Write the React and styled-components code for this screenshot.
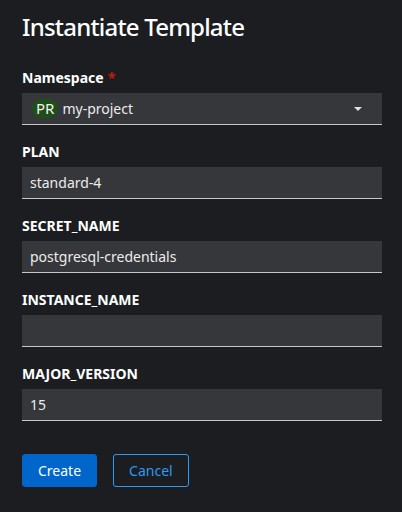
import React from "react";
import styled, { createGlobalStyle } from "styled-components";

const GlobalStyle = createGlobalStyle`
    html, body {
        margin: 0;
        padding: 0;
        background: #1b1d21;
        font-family: "Noto Sans", "Liberation Sans", sans-serif;
    }
`

const Page = styled.div`
    width: 402px;
    height: 512px;
    box-sizing: border-box;
    padding: 11px 20px 0 22px;
    color: #f0f0f0;
`

const Title = styled.h1`
    margin: 0 0 26px;
    font-size: 24px;
    font-weight: 500;
    line-height: 32px;
    letter-spacing: -0.8px;
    color: #ffffff;
`

const Form = styled.form`
    display: flex;
    flex-direction: column;
    gap: 18px;
`

const Field = styled.div`
    display: flex;
    flex-direction: column;
    gap: 6px;
`

const Label = styled.label`
    font-size: 14px;
    font-weight: 700;
    line-height: 18px;
    color: #ffffff;
`

const Required = styled.span`
    color: #c9190b;
    margin-left: 4px;
`

const Input = styled.div`
    height: 32px;
    box-sizing: border-box;
    background: #36373b;
    border-bottom: 1px solid #c7c7c7;
    padding: 0 8px;
    display: flex;
    align-items: center;
    font-size: 14px;
    color: #ececec;
`

const Select = styled(Input)`
    justify-content: space-between;
    padding: 0 20px 0 10px;
`

const SelectValue = styled.div`
    display: flex;
    align-items: center;
    gap: 4px;
`

const Badge = styled.span`
    background: #1e4f18;
    color: #f2f2f2;
    border-radius: 10px;
    padding: 0 4px;
    height: 19px;
    line-height: 19px;
    font-size: 15px;
`

const Caret = styled.span`
    width: 0;
    height: 0;
    border-left: 4px solid transparent;
    border-right: 4px solid transparent;
    border-top: 4px solid #e0e0e0;
`

const Actions = styled.div`
    display: flex;
    gap: 16px;
    margin-top: 15px;
`

const Button = styled.button`
    height: 33px;
    box-sizing: border-box;
    padding: 0 15px;
    border-radius: 3px;
    font-family: inherit;
    font-size: 14px;
    background: ${props => props.primary ? '#0066cc' : 'transparent'};
    color: ${props => props.primary ? '#ffffff' : '#2b9af3'};
    border: 1px solid ${props => props.primary ? '#0066cc' : '#2b9af3'};
`

const fields = [
    { name: 'PLAN', value: 'standard-4' },
    { name: 'SECRET_NAME', value: 'postgresql-credentials' },
    { name: 'INSTANCE_NAME', value: '' },
    { name: 'MAJOR_VERSION', value: '15' },
]

const App = () => {
    return (
        <Page>
            <GlobalStyle />
            <Title>Instantiate Template</Title>
            <Form>
                <Field>
                    <Label>Namespace<Required>*</Required></Label>
                    <Select>
                        <SelectValue>
                            <Badge>PR</Badge>
                            my-project
                        </SelectValue>
                        <Caret />
                    </Select>
                </Field>
                {fields.map(f => (
                    <Field key={f.name}>
                        <Label>{f.name}</Label>
                        <Input>{f.value}</Input>
                    </Field>
                ))}
                <Actions>
                    <Button type="button" primary>Create</Button>
                    <Button type="button">Cancel</Button>
                </Actions>
            </Form>
        </Page>
    )
}

export default App;
